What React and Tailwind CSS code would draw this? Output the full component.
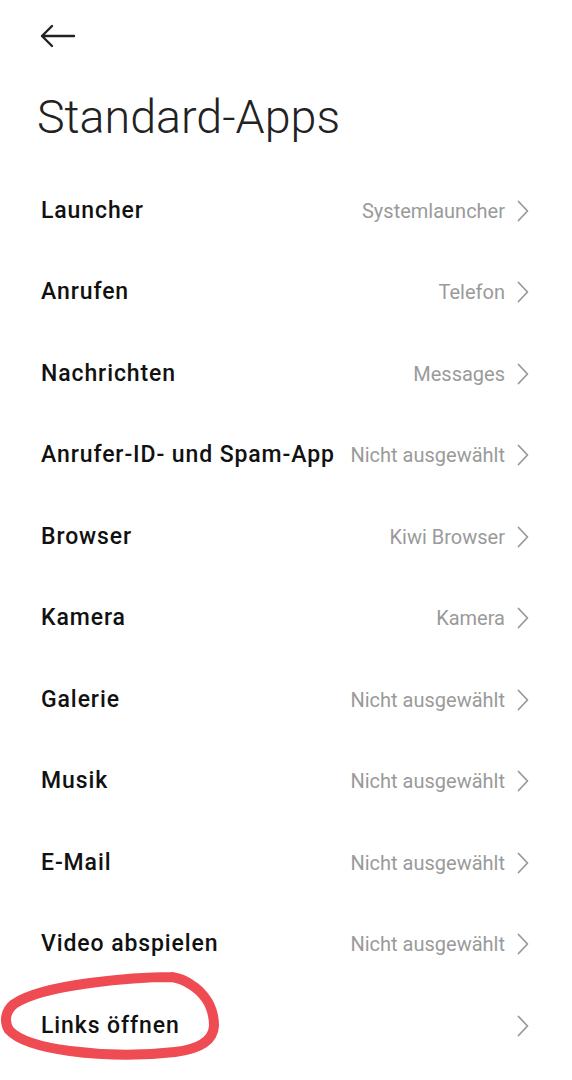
import React from "react";

const rows = [
  ["Launcher", "Systemlauncher"],
  ["Anrufen", "Telefon"],
  ["Nachrichten", "Messages"],
  ["Anrufer-ID- und Spam-App", "Nicht ausgewählt"],
  ["Browser", "Kiwi Browser"],
  ["Kamera", "Kamera"],
  ["Galerie", "Nicht ausgewählt"],
  ["Musik", "Nicht ausgewählt"],
  ["E-Mail", "Nicht ausgewählt"],
  ["Video abspielen", "Nicht ausgewählt"],
  ["Links öffnen", ""],
];

function Chevron() {
  return (
    <svg width="12" height="22" viewBox="0 0 12 22" className="shrink-0">
      <path d="M1.5 1.5 L10.5 11 L1.5 20.5" fill="none" stroke="#9a9a9a" strokeWidth="1.8" strokeLinecap="round" strokeLinejoin="round" />
    </svg>
  );
}

export default function App() {
  return (
    <div className="relative w-[572px] h-[1080px] bg-white overflow-hidden" style={{ fontFamily: "Roboto, 'Noto Sans', sans-serif" }}>
      <div className="pl-[40px] pt-[24px]">
        <svg width="36" height="24" viewBox="0 0 36 24">
          <path d="M2 12 H34 M12 2 L2 12 L12 22" fill="none" stroke="#222" strokeWidth="2.4" strokeLinecap="round" strokeLinejoin="round" />
        </svg>
      </div>
      <h1 className="mt-[41px] pl-[37px] text-[46.6px] leading-[56px] font-light text-[#222]">Standard-Apps</h1>
      <div className="mt-[25px]">
        {rows.map(([label, value]) => (
          <div key={label} className="h-[81.5px] flex items-center justify-between pl-[41px] pr-[43px]">
            <span className="text-[23px] tracking-[0.9px] font-medium text-[#111]">{label}</span>
            <div className="flex items-center gap-[12px]">
              {value && <span className="text-[20px] text-[#9a9a9a]">{value}</span>}
              <Chevron />
            </div>
          </div>
        ))}
      </div>
      <svg className="absolute left-0 top-0 pointer-events-none" width="572" height="1080" viewBox="0 0 572 1080">
        <path
          d="M172 977 C150 977 120 979 90 983 C60 987 30 993 14 1004 C5 1011 4 1022 9 1030 C18 1040 40 1047 70 1051 C100 1055 140 1056 175 1052 C200 1049 213 1041 214 1026 C214 1008 205 993 190 984 C184 980 178 978 172 977"
          fill="none"
          stroke="#ef4b52"
          strokeWidth="10"
          strokeLinecap="round"
          strokeLinejoin="round"
        />
      </svg>
    </div>
  );
}
